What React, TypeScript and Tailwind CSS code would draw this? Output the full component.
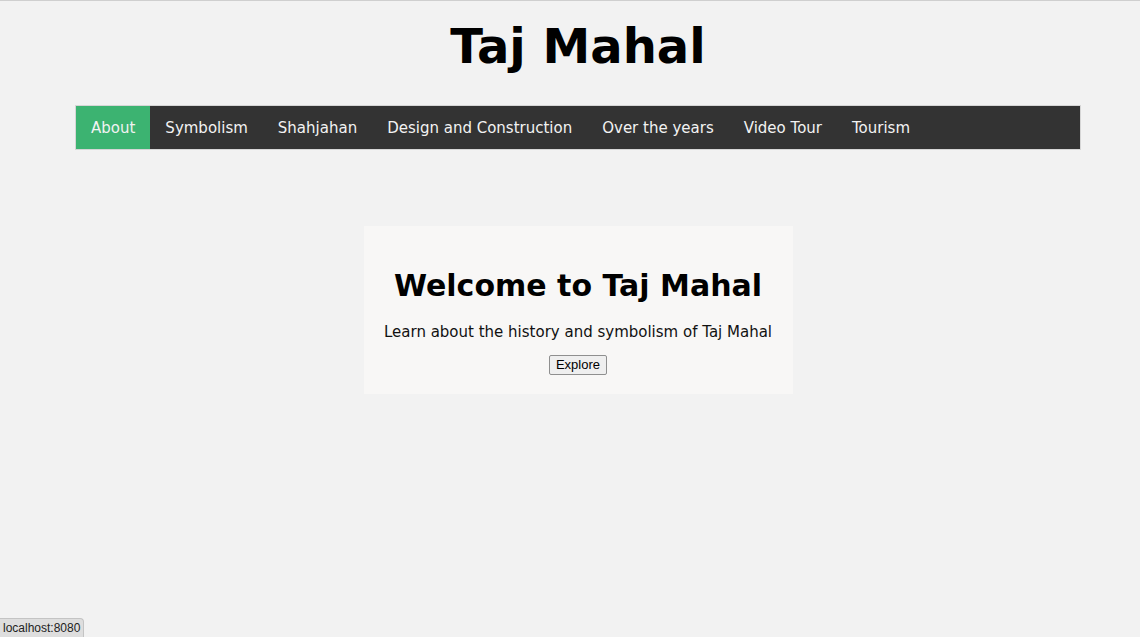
import React from 'react';

const links: string[] = [
    'About',
    'Symbolism',
    'Shahjahan',
    'Design and Construction',
    'Over the years',
    'Video Tour',
    'Tourism',
];

const App: React.FC = () => {
    return (
        <div className="min-h-[637px] bg-[#f2f2f2] border-t border-[#cfcfcf] font-['DejaVu_Sans',Verdana,sans-serif] text-black">
            <div className="ml-[75px] w-[1006px]">
                {/* Header */}
                <h1 className="pt-[17px] text-center text-[48px] font-bold leading-[56px]">Taj Mahal</h1>

                {/* Nav */}
                <nav className="mt-[31px] flex h-[45px] bg-[#333333] border border-[#d6d6d6]">
                    {links.map((name, i) => (
                        <a
                            key={name}
                            href="#"
                            className={
                                i === 0
                                    ? 'flex items-center px-[15px] pt-[2px] text-[15px] text-[#f2f2f2] bg-[#3cb371]'
                                    : 'flex items-center px-[15px] pt-[2px] text-[15px] text-[#f2f2f2]'
                            }
                        >
                            {name}
                        </a>
                    ))}
                </nav>

                {/* Welcome card */}
                <div className="mx-auto mt-[76px] w-[429px] bg-[#f8f7f6] pt-[42px] pb-[18px] text-center">
                    <h2 className="text-[30px] font-bold leading-[35px]">Welcome to Taj Mahal</h2>
                    <p className="mt-[21px] text-[15px] leading-[17px] text-[#111]">Learn about the history and symbolism of Taj Mahal</p>
                    <button className="mt-[14px] h-[20px] rounded-[2px] border border-[#8f8f8f] bg-[#efefef] px-[6px] font-['Liberation_Sans',Arial,sans-serif] text-[13px] leading-[16px] text-black">
                        Explore
                    </button>
                </div>
            </div>

            {/* browser status bubble */}
            <div className="fixed bottom-0 left-0 rounded-tr-[4px] border-t border-r border-[#c4c4c4] bg-[#dedede] px-[3px] py-[1px] font-['Liberation_Sans',Arial,sans-serif] text-[12px] leading-[16px] text-[#222]">
                localhost:8080
            </div>
        </div>
    );
};

export default App;
